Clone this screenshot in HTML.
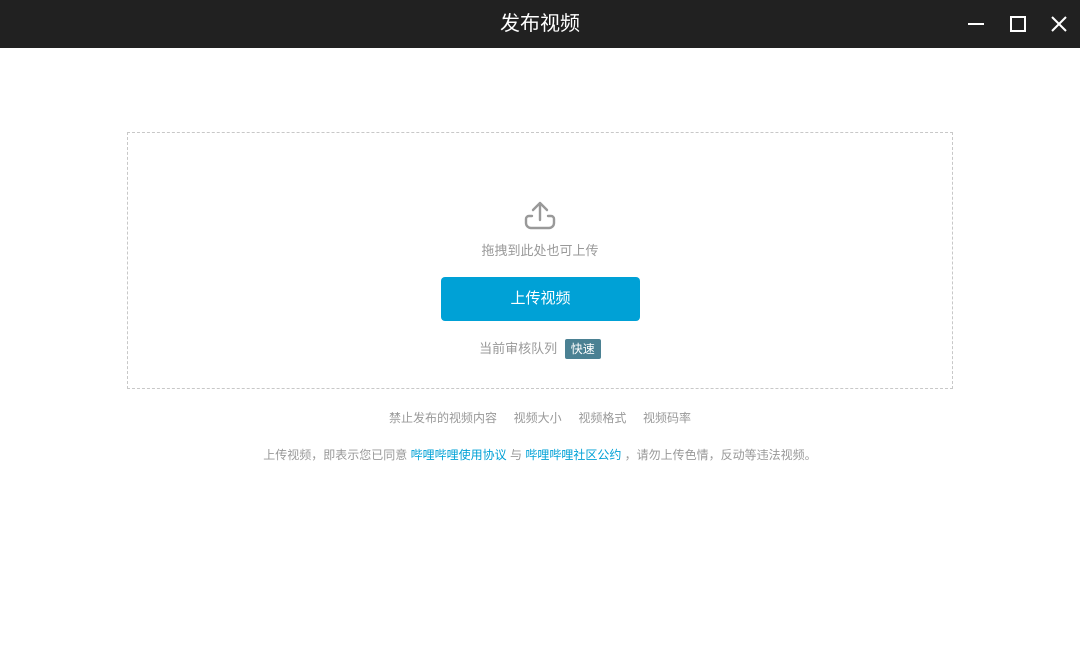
<!DOCTYPE html>
<html><head><meta charset="utf-8"><style>
body{margin:0;width:1080px;height:661px;overflow:hidden;background:#fff;font-family:"Liberation Sans","Noto Sans CJK SC",sans-serif;position:relative}
.bar{position:absolute;left:0;top:0;width:1080px;height:48px;background:#212121;color:#fff}
.title{position:absolute;left:0;width:1080px;top:12px;text-align:center;font-size:20px;line-height:24px}
.box{position:absolute;left:127px;top:132px;width:824px;height:255px;border:1px dashed #c8c8c8}
.t{position:absolute;left:0;width:1080px;text-align:center;font-size:12px;color:#999}
.btn{position:absolute;left:441px;top:277px;width:199px;height:44px;background:#00a1d6;border-radius:4px;color:#fff;font-size:15px;line-height:44px;text-align:center}
a{color:#00a1d6;text-decoration:none}
</style></head><body>
<div class="bar"><div class="title">发布视频</div>
<svg style="position:absolute;left:966px;top:14px" width="110" height="20" fill="none" stroke="#fff" stroke-width="2">
<line x1="2" y1="10" x2="18" y2="10"/><rect x="45" y="3" width="14" height="14"/><line x1="86" y1="3" x2="100" y2="17"/><line x1="100" y1="3" x2="86" y2="17"/></svg></div>
<div class="box"></div>
<svg style="position:absolute;left:523px;top:200px" width="34" height="32" fill="none" stroke="#999" stroke-width="2.4" stroke-linecap="round" stroke-linejoin="round">
<path d="M17 20V3M10 10l7-7 7 7M9 16H6a3 3 0 0 0-3 3v4a5 5 0 0 0 5 5h18a5 5 0 0 0 5-5v-4a3 3 0 0 0-3-3h-3"/></svg>
<div class="t" style="top:240px;font-size:13px">拖拽到此处也可上传</div>
<div class="btn">上传视频</div>
<div class="t" style="top:338px;font-size:13px">当前审核队列 <span style="display:inline-block;background:#4b8193;color:#fff;font-size:12px;padding:0 6px;line-height:20px;border-radius:2px;margin-left:4px">快速</span></div>
<div class="t" style="top:409px">禁止发布的视频内容&nbsp;&nbsp;&nbsp;&nbsp;&nbsp;视频大小&nbsp;&nbsp;&nbsp;&nbsp;&nbsp;视频格式&nbsp;&nbsp;&nbsp;&nbsp;&nbsp;视频码率</div>
<div class="t" style="top:446px">上传视频，即表示您已同意 <a>哔哩哔哩使用协议</a> 与 <a>哔哩哔哩社区公约</a> ，请勿上传色情，反动等违法视频。</div>
</body></html>
